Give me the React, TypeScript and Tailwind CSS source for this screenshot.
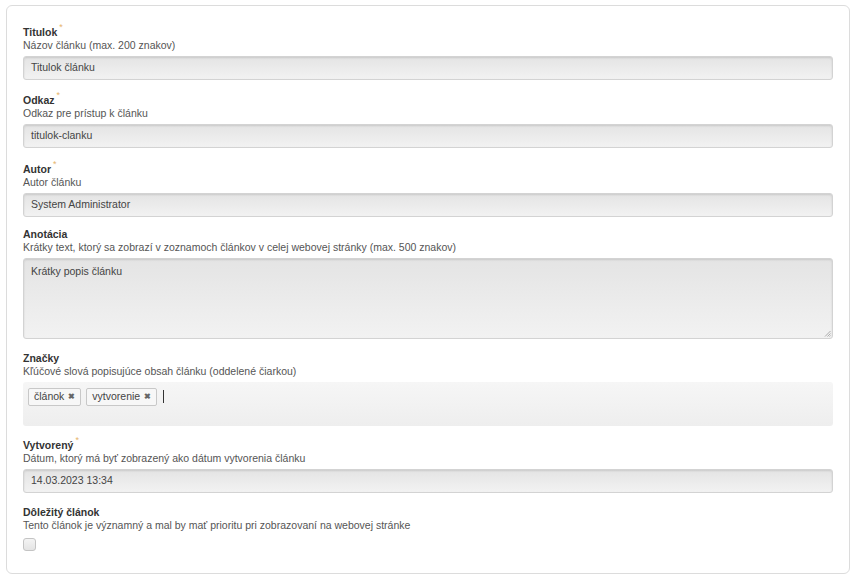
import React from 'react';

const font = { fontFamily: '"Liberation Sans", Arial, sans-serif' };

type FieldProps = {
  label: string;
  required?: boolean;
  lift?: boolean;
  className?: string;
  hint: string;
  children: React.ReactNode;
};

const Field: React.FC<FieldProps> = ({ label, required, lift, className, hint, children }) => (
  <div className={`flex flex-col ${className ?? ''}`}>
    <div className={required && !lift ? 'pt-[2px] leading-[13px]' : 'leading-[13px]'}>
      <span className="text-[10.5px] font-bold text-[#333]">{label}</span>
      {required && <sup className="relative top-[-6px] text-[9px] text-[#e6b46a] ml-[2px]">*</sup>}
    </div>
    <div className="text-[10.5px] leading-[13px] text-[#555]">{hint}</div>
    <div className="mt-[4px]">{children}</div>
  </div>
);

const boxCls =
  'w-full border border-[#d3d3d3] rounded-[3px] bg-gradient-to-b from-[#e4e4e4] to-[#f2f2f2] shadow-[inset_0_1px_2px_rgba(0,0,0,0.12)] text-[10.5px] text-[#444]';

const Input: React.FC<{ value: string }> = ({ value }) => (
  <div className={`${boxCls} h-[24px] px-[7px] flex items-center`}>{value}</div>
);

const Tag: React.FC<{ text: string }> = ({ text }) => (
  <span className="inline-flex items-center h-[18px] px-[5px] border border-[#c8c8c8] rounded-[2px] bg-[#f7f7f7] text-[10.5px] text-[#444] gap-[4px]">
    {text}
    <span className="text-[8px] font-bold text-[#666] leading-none">✖</span>
  </span>
);

export default function App() {
  return (
    <div className="w-[855px] h-[581px] bg-white pt-[5px] pl-[6px]" style={font}>
      <div className="w-[844px] h-[569px] border border-[#dcdcdc] rounded-[6px] px-[16px] pt-[16px] flex flex-col gap-[11px]">
        <Field label="Titulok" required hint="Názov článku (max. 200 znakov)">
          <Input value="Titulok článku" />
        </Field>
        <Field label="Odkaz" required className="-mt-[1px]" hint="Odkaz pre prístup k článku">
          <Input value="titulok-clanku" />
        </Field>
        <Field label="Autor" required hint="Autor článku">
          <Input value="System Administrator" />
        </Field>
        <Field
          label="Anotácia"
          className="-mt-[2px]"
          hint="Krátky text, ktorý sa zobrazí v zoznamoch článkov v celej webovej stránky (max. 500 znakov)"
        >
          <div className={`${boxCls} h-[81px] px-[7px] pt-[5px] relative`}>
            Krátky popis článku
            <svg className="absolute right-[1px] bottom-[1px]" width="7" height="7" viewBox="0 0 7 7">
              <path d="M6.5 1 L1 6.5 M6.5 3.5 L3.5 6.5 M6.5 5.5 L5.5 6.5" stroke="#999" strokeWidth="0.8" />
            </svg>
          </div>
        </Field>
        <Field label="Značky" hint="Kľúčové slová popisujúce obsah článku (oddelené čiarkou)">
          <div className="w-full h-[44px] rounded-[3px] bg-gradient-to-b from-[#f6f6f6] to-[#eeeeee] px-[5px] pt-[6px] flex items-start gap-[5px]">
            <Tag text="článok" />
            <Tag text="vytvorenie" />
            <span className="ml-[1px] mt-[2px] w-[1px] h-[13px] bg-[#333]" />
          </div>
        </Field>
        <Field label="Vytvorený" required lift hint="Dátum, ktorý má byť zobrazený ako dátum vytvorenia článku">
          <Input value="14.03.2023 13:34" />
        </Field>
        <Field label="Dôležitý článok" hint="Tento článok je významný a mal by mať prioritu pri zobrazovaní na webovej stránke">
          <div className="w-[13px] h-[13px] mt-[2px] border border-[#c4c4c4] rounded-[3px] bg-gradient-to-b from-[#f4f4f4] to-[#e4e4e4]" />
        </Field>
      </div>
    </div>
  );
}
